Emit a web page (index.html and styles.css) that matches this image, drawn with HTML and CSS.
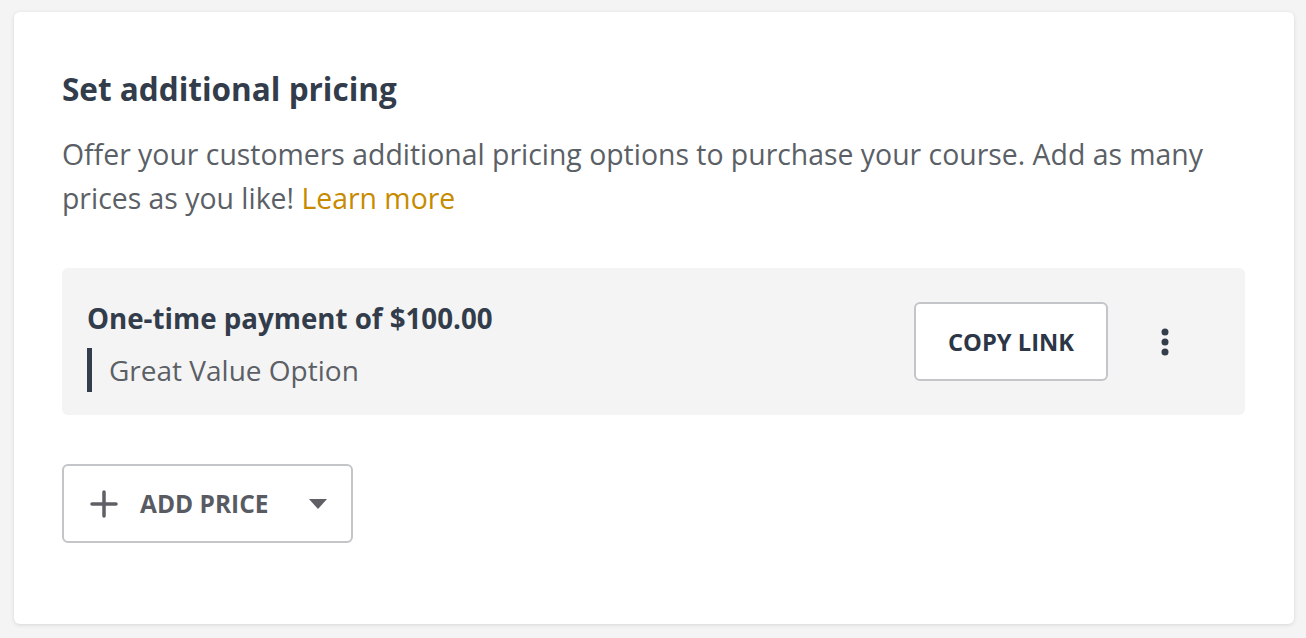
FILE: index.html
```html
<!DOCTYPE html>
<html lang="en">
<head>
  <meta charset="UTF-8">
  <meta name="viewport" content="width=device-width, initial-scale=1.0">
  <title>Set additional pricing</title>
  <link rel="stylesheet" href="styles.css">
</head>
<body>
  <div class="card">
    <h2 class="card-title">Set additional pricing</h2>
    <p class="card-desc">
      Offer your customers additional pricing options to purchase your course. Add as many
      prices as you like! <a href="#" class="link">Learn more</a>
    </p>

    <div class="price-row">
      <div class="price-info">
        <div class="price-name">One-time payment of $100.00</div>
        <div class="price-note">Great Value Option</div>
      </div>
      <button class="btn btn-copy">COPY LINK</button>
      <button class="kebab" aria-label="More options">
        <svg width="8" height="28" viewBox="0 0 8 28">
          <circle cx="4" cy="4" r="3.5" fill="#343d4c"/>
          <circle cx="4" cy="14" r="3.5" fill="#343d4c"/>
          <circle cx="4" cy="24" r="3.5" fill="#343d4c"/>
        </svg>
      </button>
    </div>

    <button class="btn btn-add">
      <svg class="plus" width="28" height="28" viewBox="0 0 28 28">
        <path d="M14 2v24M2 14h24" stroke="#5e6066" stroke-width="3.5" stroke-linecap="round"/>
      </svg>
      <span class="btn-add-label">ADD PRICE</span>
      <svg class="caret" width="18" height="10" viewBox="0 0 18 10">
        <path d="M0 0h18L9 10z" fill="#5e6066"/>
      </svg>
    </button>
  </div>
</body>
</html>
```

FILE: styles.css
```css
body {
  margin: 0;
  padding: 12px 12px 14px 14px;
  background-color: #f4f4f4;
  font-family: "Open Sans", Lato, sans-serif;
}
.card {
  width: 1280px;
  height: 612px;
  box-sizing: border-box;
  background-color: #fff;
  border-radius: 6px;
  box-shadow: 0 1px 4px rgba(0, 0, 0, 0.12);
  padding: 57px 40px 0 48px;
}
.card-title {
  margin: 0;
  font-size: 31.5px;
  font-weight: 700;
  line-height: 40px;
  color: #323c4b;
}
.card-desc {
  max-width: 1160px;
  margin: 23px 0 0;
  font-size: 28.4px;
  line-height: 44px;
  color: #5b5f66;
}
.link {
  color: #c78b00;
  text-decoration: none;
}
.price-row {
  display: flex;
  align-items: center;
  margin: 48px 9px 0 0;
  height: 147px;
  box-sizing: border-box;
  padding: 0 76px 0 25px;
  background-color: #f4f4f4;
  border-radius: 6px;
}
.price-info {
  flex: 1;
  padding-top: 10px;
}
.price-name {
  font-size: 27.7px;
  font-weight: 700;
  line-height: 34px;
  color: #323c4b;
}
.price-note {
  margin-top: 13px;
  padding-left: 17px;
  border-left: 5px solid #343d4c;
  font-size: 28px;
  line-height: 44px;
  color: #5b5f66;
}
.btn {
  display: flex;
  align-items: center;
  height: 79px;
  box-sizing: border-box;
  background-color: #fff;
  border: 2px solid #c3c5c8;
  border-radius: 6px;
  font-family: inherit;
  font-weight: 700;
  cursor: pointer;
}
.btn-copy {
  width: 194px;
  justify-content: center;
  font-size: 23.7px;
  color: #2c3646;
}
.kebab {
  margin-left: 53px;
  padding: 0;
  border: none;
  background: none;
  display: flex;
  cursor: pointer;
}
.btn-add {
  margin-top: 49px;
  width: 291px;
  padding: 0 24px 0 26px;
  font-size: 24.5px;
  color: #595b62;
}
.btn-add-label {
  margin-left: 22px;
  flex: 1;
  text-align: left;
}
```
